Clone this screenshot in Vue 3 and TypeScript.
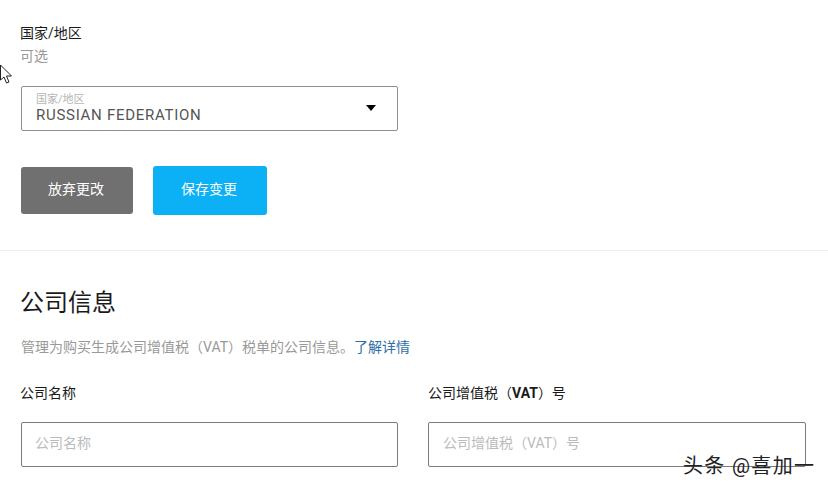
<script setup lang="ts">
interface Field {
  id: string;
  placeholder: string;
}

const fields: Field[] = [
  { id: 'name', placeholder: '公司名称' },
  { id: 'vat', placeholder: '公司增值税（VAT）号' },
];
</script>

<template>
  <div class="page">
    <svg class="cursor" width="13" height="21" viewBox="0 0 13 21">
      <path d="M0.5 1 L0.5 16 L4 13 L6.5 19 L9 18 L6.5 12 L11.5 12 Z" fill="#fff" stroke="#222" stroke-width="1" />
    </svg>

    <section class="country">
      <div class="label">国家/地区</div>
      <div class="optional">可选</div>
      <div class="select">
        <div class="select__text">
          <span class="select__caption">国家/地区</span>
          <span class="select__value">RUSSIAN FEDERATION</span>
        </div>
        <span class="select__arrow" />
      </div>
      <div class="actions">
        <button class="btn btn--discard">放弃更改</button>
        <button class="btn btn--save">保存变更</button>
      </div>
    </section>

    <hr class="divider">

    <section class="company">
      <h2 class="company__title">公司信息</h2>
      <p class="company__desc">管理为购买生成公司增值税（VAT）税单的公司信息。<a class="company__link">了解详情</a></p>
      <div class="company__grid">
        <div v-for="field in fields" :key="field.id" class="field">
          <div class="label">
            <template v-if="field.id === 'vat'">公司增值税（<b>VAT</b>）号</template>
            <template v-else>{{ field.placeholder }}</template>
          </div>
          <div class="input" :class="{ 'input--tight': field.id === 'name' }">{{ field.placeholder }}</div>
        </div>
      </div>
    </section>

    <div class="watermark">头条 @喜加一</div>
  </div>
</template>

<style>
html, body {
  margin: 0;
  background: #fff;
  overflow: hidden;
}
</style>

<style scoped>
.page {
  position: relative;
  width: 828px;
  height: 492px;
  overflow: hidden;
  background: #fff;
  font-family: Roboto, "Noto Sans CJK SC", sans-serif;
  font-size: 14px;
  color: #111;
  box-sizing: border-box;
}

.cursor {
  position: absolute;
  left: 0;
  top: 64px;
}

/* country */
.country {
  padding: 23px 0 0 21px;
}

.label {
  margin-left: -1px;
  line-height: 20px;
  color: #1a1a1a;
}

.optional {
  margin: 3px 0 0 -1px;
  line-height: 20px;
  color: #999;
}

.select {
  width: 377px;
  height: 45px;
  margin-top: 20px;
  box-sizing: border-box;
  border: 1px solid #8e8e8e;
  border-radius: 2px;
  padding: 5px 21px 0 14px;
  display: flex;
  align-items: center;
  justify-content: space-between;
}

.select__text {
  display: flex;
  flex-direction: column;
  margin-top: -5px;
}

.select__caption {
  font-size: 11px;
  line-height: 12px;
  color: #b5b5b5;
}

.select__value {
  position: relative;
  top: 1px;
  font-size: 15px;
  line-height: 17px;
  letter-spacing: 0.72px;
  color: #555;
}

.select__arrow {
  width: 0;
  height: 0;
  margin-top: -6px;
  border-left: 5.5px solid transparent;
  border-right: 5.5px solid transparent;
  border-top: 6px solid #000;
}

.actions {
  display: flex;
  align-items: center;
  gap: 20px;
  margin-top: 35px;
}

.btn {
  border: none;
  border-radius: 3px;
  padding: 0 2px 5px 0;
  color: #fff;
  font-family: inherit;
  font-size: 14px;
}

.btn--discard {
  width: 112px;
  height: 47px;
  background: #707070;
}

.btn--save {
  width: 114px;
  height: 49px;
  background: #0cb0f5;
}

.divider {
  height: 1px;
  margin: 35px 0 0;
  border: none;
  background: #ececec;
}

/* company */
.company {
  padding: 0 22px 0 21px;
}

.company__title {
  margin: 35px 0 0 -1px;
  font-size: 24px;
  font-weight: 400;
  line-height: 34px;
  color: #1a1a1a;
}

.company__desc {
  margin: 17px 0 0 0;
  line-height: 20px;
  color: #999;
}

.company__link {
  color: #2f6ea8;
}

.company__grid {
  display: grid;
  grid-template-columns: 377px 378px;
  column-gap: 30px;
  margin-top: 26px;
}

.field b {
  font-weight: 700;
}

.field:last-child .label {
  margin-left: 0;
}

.input {
  height: 45px;
  margin-top: 19px;
  box-sizing: border-box;
  border: 1px solid #7c7c7c;
  border-radius: 2px;
  padding: 0 14px;
  line-height: 41px;
  color: #bbb;
}

.input--tight {
  padding-left: 13px;
}

.watermark {
  position: absolute;
  left: 683px;
  top: 453px;
  font-size: 20px;
  letter-spacing: 1.35px;
  line-height: 26px;
  white-space: nowrap;
  color: #222;
}
</style>
